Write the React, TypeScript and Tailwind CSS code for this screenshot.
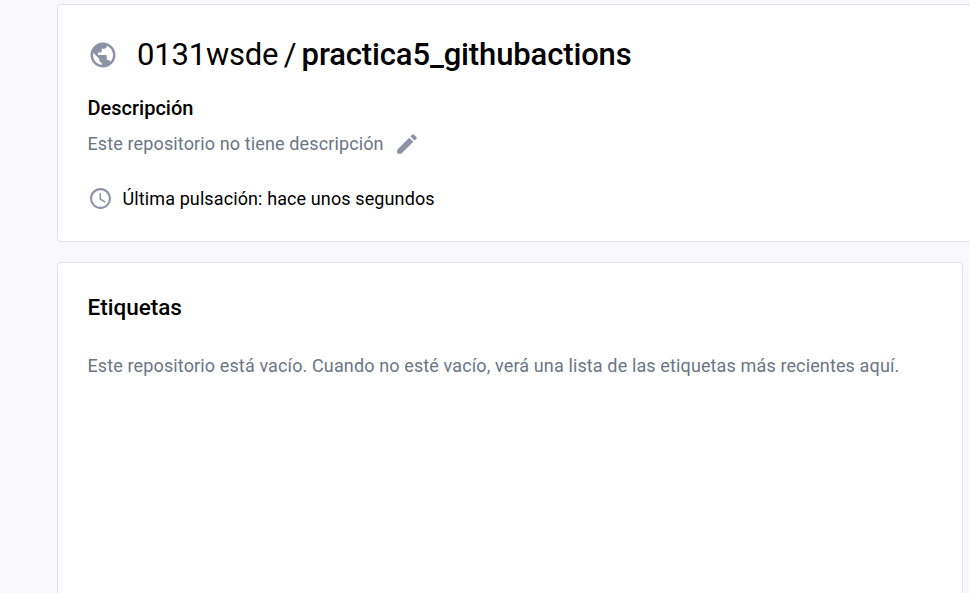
import { MdPublic, MdEdit, MdAccessTime } from "react-icons/md";

export default function App() {
  return (
    <div className="h-[593px] w-[970px] overflow-hidden bg-[#f9f9fb] pl-[57px] pt-1 font-['Roboto',sans-serif] text-black">
      <section className="h-[238px] w-[930px] rounded-sm border border-[#e1e2e6] bg-white pl-[29.5px] pt-[30px]">
        <h1 className="flex h-10 items-center whitespace-nowrap text-[31px]">
          <MdPublic className="mr-[19.5px] size-[30px] shrink-0 text-[#8c93a6]" />
          <span className="tracking-[-0.2px]">0131wsde</span>
          <span className="ml-[5.5px] mr-[5px]">/</span>
          <span className="font-medium tracking-[-0.13px]">practica5_githubactions</span>
        </h1>
        <h2 className="mt-[19px] h-7 text-[20px] font-medium leading-7">Descripción</h2>
        <div className="mt-[9px] flex h-6 items-center text-[18px] text-[#6b7684]">
          <span className="tracking-[0.125px]">Este repositorio no tiene descripción</span>
          <MdEdit className="ml-[10px] mt-px size-[26px] text-[#8c93a6]" />
        </div>
        <div className="mt-[31px] flex h-6 items-center text-[18px]">
          <MdAccessTime className="mr-[10px] size-[25px] text-[#8c93a6]" />
          <span className="tracking-[0.11px]">Última pulsación: hace unos segundos</span>
        </div>
      </section>
      <section className="mt-5 h-[360px] w-[906px] rounded-sm border border-[#e1e2e6] bg-white pl-[29.5px] pt-[28px]">
        <h2 className="h-8 text-[22.5px] font-medium leading-8">Etiquetas</h2>
        <p className="mt-[31px] whitespace-nowrap text-[18px] leading-6 tracking-[0.127px] text-[#6b7684]">
          Este repositorio está vacío. Cuando no esté vacío, verá una lista de las etiquetas más recientes aquí.
        </p>
      </section>
    </div>
  );
}
